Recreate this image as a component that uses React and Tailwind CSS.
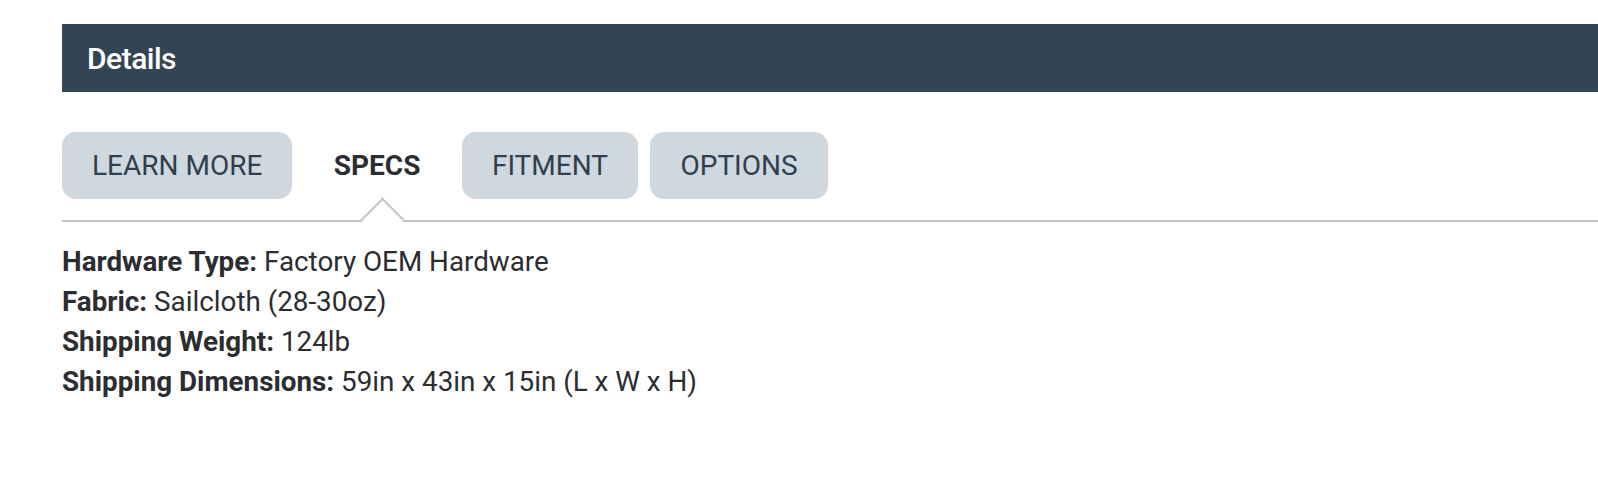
// Product details panel: title bar, tab strip and the specs list.

const TABS = [
  { label: "LEARN MORE" },
  { label: "SPECS", active: true },
  { label: "FITMENT" },
  { label: "OPTIONS" },
];

const SPECS = [
  { name: "Hardware Type", value: "Factory OEM Hardware" },
  { name: "Fabric", value: "Sailcloth (28-30oz)" },
  { name: "Shipping Weight", value: "124lb" },
  { name: "Shipping Dimensions", value: "59in x 43in x 15in (L x W x H)" },
];

function Tab({ label, active }) {
  if (active) {
    return (
      <li className="relative flex h-[67px] items-center px-[29px] text-[28px] font-bold text-[#2b2d30]">
        {label}
        {/* pointer that sits on the strip's bottom rule */}
        <span className="absolute bottom-[-36px] left-[62px] h-[31px] w-[31px] rotate-45 border-t-2 border-l-2 border-[#c4c4c4] bg-white" />
      </li>
    );
  }
  return (
    <li className="flex h-[67px] items-center rounded-[14px] bg-[#cfd7df] px-[30px] text-[28px] text-[#2f3f4d]">
      {label}
    </li>
  );
}

export default function App() {
  return (
    <div className="min-h-[480px] bg-white pl-[62px] pt-[24px] font-['Roboto',sans-serif]">
      <div className="flex h-[68px] items-center bg-[#334554] pl-[25px]">
        <h2 className="text-[30px] font-medium tracking-[-0.5px] text-white">Details</h2>
      </div>

      <ul className="mt-[40px] flex gap-[12.5px] border-b-2 border-[#c4c4c4] pb-[21px]">
        {TABS.map((tab) => (
          <Tab key={tab.label} {...tab} />
        ))}
      </ul>

      <dl className="mt-[20px] text-[27.8px] leading-[40px] text-[#2b2d30]">
        {SPECS.map((spec) => (
          <div key={spec.name}>
            <dt className="inline font-bold">{spec.name}:</dt>{" "}
            <dd className="inline">{spec.value}</dd>
          </div>
        ))}
      </dl>
    </div>
  );
}
